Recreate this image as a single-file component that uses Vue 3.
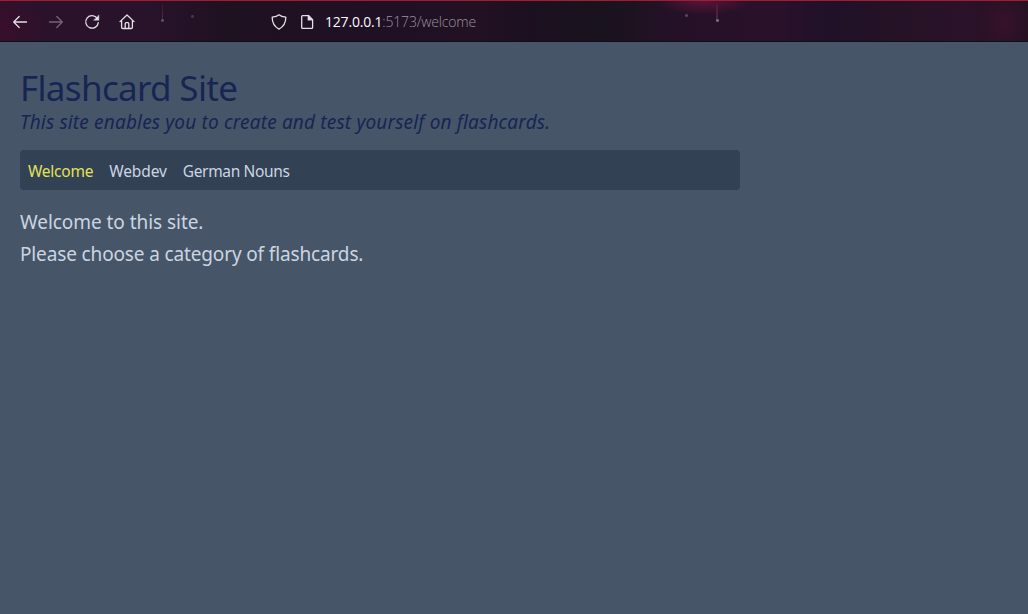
<script setup>
const links = [
  { label: 'Welcome', active: true, cls: 'welcome' },
  { label: 'Webdev', active: false, cls: 'webdev' },
  { label: 'German Nouns', active: false, cls: 'german' },
]
</script>

<template>
  <div class="window">
    <header class="toolbar">
      <div class="controls">
        <svg width="16" height="16" viewBox="0 0 16 16"><path d="M14.5 8H1.800M7.200 2.500L1.700 8l5.500 5.500" /></svg>
        <svg class="dim" width="16" height="16" viewBox="0 0 16 16"><path d="M1.500 8h12.700M8.800 2.500L14.300 8l-5.500 5.500" /></svg>
        <svg width="16" height="16" viewBox="0 0 16 16"><path d="M13.300 4.400A6.300 6.300 0 1 0 14.300 8.600" /><path class="solid" d="M14.900 1.200v5.100H9.800z" /></svg>
        <svg class="home" width="16" height="16" viewBox="0 0 16 16"><path d="M1 7.600L8 1l7 6.600M2.600 6.500v6.800q0 1.200 1.200 1.200h8.400q1.200 0 1.200-1.200V6.500M6.200 14.500V9.700q0-1 1-1h1.600q1 0 1 1v4.800" /></svg>
      </div>
      <div class="address">
        <svg width="16" height="16" viewBox="0 0 16 16"><path d="M8 .8C6.300 2.200 3.800 2.900 1.200 3.200 1.100 8.300 3.300 12.700 8 15.100c4.700-2.400 6.900-6.800 6.800-11.900C12.200 2.900 9.700 2.200 8 .8z" /></svg>
        <svg width="16" height="16" viewBox="0 0 16 16"><path d="M9.800 1.700H3.600q-.9 0-.9.900v10.900q0 .9.900.9h9.100q.9 0 .9-.9V5.600z" /><path class="solid" d="M9 1.200L14 6.200H9z" /></svg>
        <span class="url"><span class="host">127.0.0.1</span>:5173/welcome</span>
      </div>
    </header>
    <main class="page">
      <h1>Flashcard Site</h1>
      <p class="tagline">This site enables you to create and test yourself on flashcards.</p>
      <nav>
        <a v-for="link in links" :key="link.label" :class="[link.cls, { active: link.active }]">{{ link.label }}</a>
      </nav>
      <p class="copy intro">Welcome to this site.</p>
      <p class="copy">Please choose a category of flashcards.</p>
    </main>
  </div>
</template>

<style>
body {
  margin: 0;
  background: #475569;
}
</style>

<style scoped>
.window {
  height: 614px;
  overflow: hidden;
  background: #475569;
  font-family: "Noto Sans", "Open Sans", sans-serif;
  font-variant-ligatures: none;
}
.toolbar {
  box-sizing: border-box;
  height: 42px;
  border-top: 1px solid #a51c31;
  border-bottom: 1px solid #110c1c;
  display: flex;
  align-items: center;
  padding: 1px 0 0 12px;
  background:
    radial-gradient(circle, #76697a 0 1px, transparent 2px) 715px 17px / 5px 5px no-repeat,
    radial-gradient(circle, #594456 0 1px, transparent 2px) 684px 12px / 5px 5px no-repeat,
    radial-gradient(circle, #624a60 0 1px, transparent 2px) 160px 17px / 5px 5px no-repeat,
    radial-gradient(circle, #47334a 0 1px, transparent 2px) 190px 13px / 5px 5px no-repeat,
    linear-gradient(#4f1b3c, #4d2542) 716px 3px / 2px 17px no-repeat,
    linear-gradient(#34142e, #4e2d48) 162px 2px / 1px 17px no-repeat,
    radial-gradient(ellipse 48px 14px at 704px 0, #5a1438, #5a143800),
    radial-gradient(ellipse 26px 30px at 1004px 22px, #37122a, #37122a00),
    radial-gradient(ellipse 50px 40px at 0 25px, #390e2b, #390e2b00),
    linear-gradient(90deg, #2b122a 0, #28132a 150px, #1e1120 230px, #201024 360px, #211123 480px, #1c1020 530px, #19131d 600px, #251127 680px, #29112a 780px, #1f1128 830px, #251225 890px, #2a1228 960px, #261122 100%);
}
svg {
  display: block;
  fill: none;
  stroke: #e3dfe5;
  stroke-width: 1.3;
  stroke-linecap: round;
  stroke-linejoin: round;
}
.solid {
  fill: #e3dfe5;
  stroke-width: .4;
}
.dim {
  opacity: .4;
}
.home {
  margin-left: -1px;
}
.controls {
  display: flex;
  gap: 20px;
  width: 259px;
}
.address {
  display: flex;
  align-items: center;
  gap: 12px;
}
.url {
  margin: 1px 0 0 -2px;
  font-size: 14px;
  line-height: 20px;
  font-family: "Open Sans", "Noto Sans", sans-serif;
  font-weight: 300;
  letter-spacing: -.17px;
  color: #9b929f;
  white-space: nowrap;
}
.host {
  font-weight: 400;
  letter-spacing: -.2px;
  color: #fbfbfe;
}
.page {
  padding: 26px 20px 0;
}
h1,
p {
  margin: 0;
  font-weight: 400;
  color: #172554;
  white-space: nowrap;
}
h1 {
  font-size: 35px;
  line-height: 40px;
  letter-spacing: -.67px;
}
.tagline {
  font-size: 19px;
  line-height: 28px;
  font-style: italic;
  letter-spacing: .17px;
}
nav {
  box-sizing: border-box;
  width: 720px;
  height: 40px;
  margin: 14px 0 16px;
  padding: 2px 8px 0;
  display: flex;
  align-items: center;
  gap: 16px;
  border-radius: 4px;
  background: #334155;
  font-size: 15.5px;
}
nav a {
  color: #cbd5e1;
  white-space: nowrap;
}
.welcome {
  letter-spacing: -.25px;
}
.webdev {
  letter-spacing: -.1px;
}
.german {
  letter-spacing: -.35px;
}
nav .active {
  color: #e2e155;
}
.copy {
  font-size: 19px;
  line-height: 32px;
  color: #cbd5e1;
  letter-spacing: -.14px;
}
.intro {
  letter-spacing: -.05px;
}
</style>
